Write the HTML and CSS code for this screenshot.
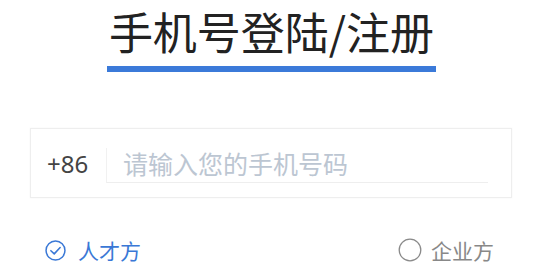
FILE: index.html
```html
<!DOCTYPE html>
<html lang="zh-CN">
<head>
<meta charset="utf-8">
<link rel="stylesheet" href="styles.css">
</head>
<body>
<div class="page">
  <header class="head">
    <h1 class="title">手机号登陆/注册</h1>
  </header>
  <div class="phone-box">
    <span class="prefix">+86</span>
    <div class="field"><input class="input" type="text" placeholder="请输入您的手机号码"></div>
  </div>
  <div class="roles">
    <label class="role active">
      <svg class="radio" viewBox="0 0 20 20" width="21" height="21"><circle cx="10" cy="10" r="9" fill="none" stroke="#3a78d6" stroke-width="1.4"/><path d="M5.6 10.2 L8.8 13.2 L14.4 7.2" fill="none" stroke="#3a78d6" stroke-width="1.5" stroke-linecap="round" stroke-linejoin="round"/></svg>
      <span>人才方</span>
    </label>
    <label class="role">
      <svg class="radio big" viewBox="0 0 24 24" width="24" height="24"><circle cx="12" cy="12" r="10.8" fill="none" stroke="#8a8a8a" stroke-width="1.3"/></svg>
      <span>企业方</span>
    </label>
  </div>
</div>
</body>
</html>
```

FILE: styles.css
```css
html, body {
  margin: 0;
  padding: 0;
  background: #ffffff;
}
body {
  font-family: "Noto Sans CJK SC", "Noto Sans", sans-serif;
  width: 543px;
  height: 272px;
  overflow: hidden;
}
.page {
  display: flex;
  flex-direction: column;
}
.head {
  display: flex;
  justify-content: center;
  padding-top: 6px;
}
.title {
  margin: 0;
  font-size: 44px;
  font-weight: 400;
  line-height: 50px;
  color: #222222;
  padding: 0 2px 10px;
  border-bottom: 6px solid #3b7ad9;
}
.phone-box {
  margin: 56px 31px 0 30px;
  height: 68px;
  border: 1px solid #eeeeee;
  box-shadow: 0 0 2px rgba(0,0,0,0.04);
  display: flex;
  align-items: center;
  padding-left: 16px;
  padding-right: 23px;
}
.prefix {
  font-size: 24px;
  color: #444444;
  width: 59px;
  font-family: "Noto Sans", sans-serif;
}
.field {
  flex: 1;
  height: 34px;
  margin-top: 4px;
  border-left: 1px solid #f1f1f1;
  border-bottom: 1px solid #eeeeee;
  display: flex;
  align-items: center;
}
.input {
  border: none;
  outline: none;
  background: transparent;
  padding: 0 0 0 16px;
  margin: 0;
  width: 100%;
  font-family: "Noto Sans CJK SC", sans-serif;
  font-size: 25px;
  color: #333;
  height: 34px;
  margin-top: -4px;
}
.input::placeholder {
  color: #bcc6d2;
}
.roles {
  display: flex;
  justify-content: space-between;
  align-items: center;
  margin-top: 37px;
  padding: 0 49px 0 45px;
}
.role {
  display: flex;
  align-items: center;
  gap: 9px;
  font-size: 21px;
  color: #888888;
}
.role.active {
  color: #3a78d6;
  gap: 12px;
}
.radio {
  display: block;
}
```
